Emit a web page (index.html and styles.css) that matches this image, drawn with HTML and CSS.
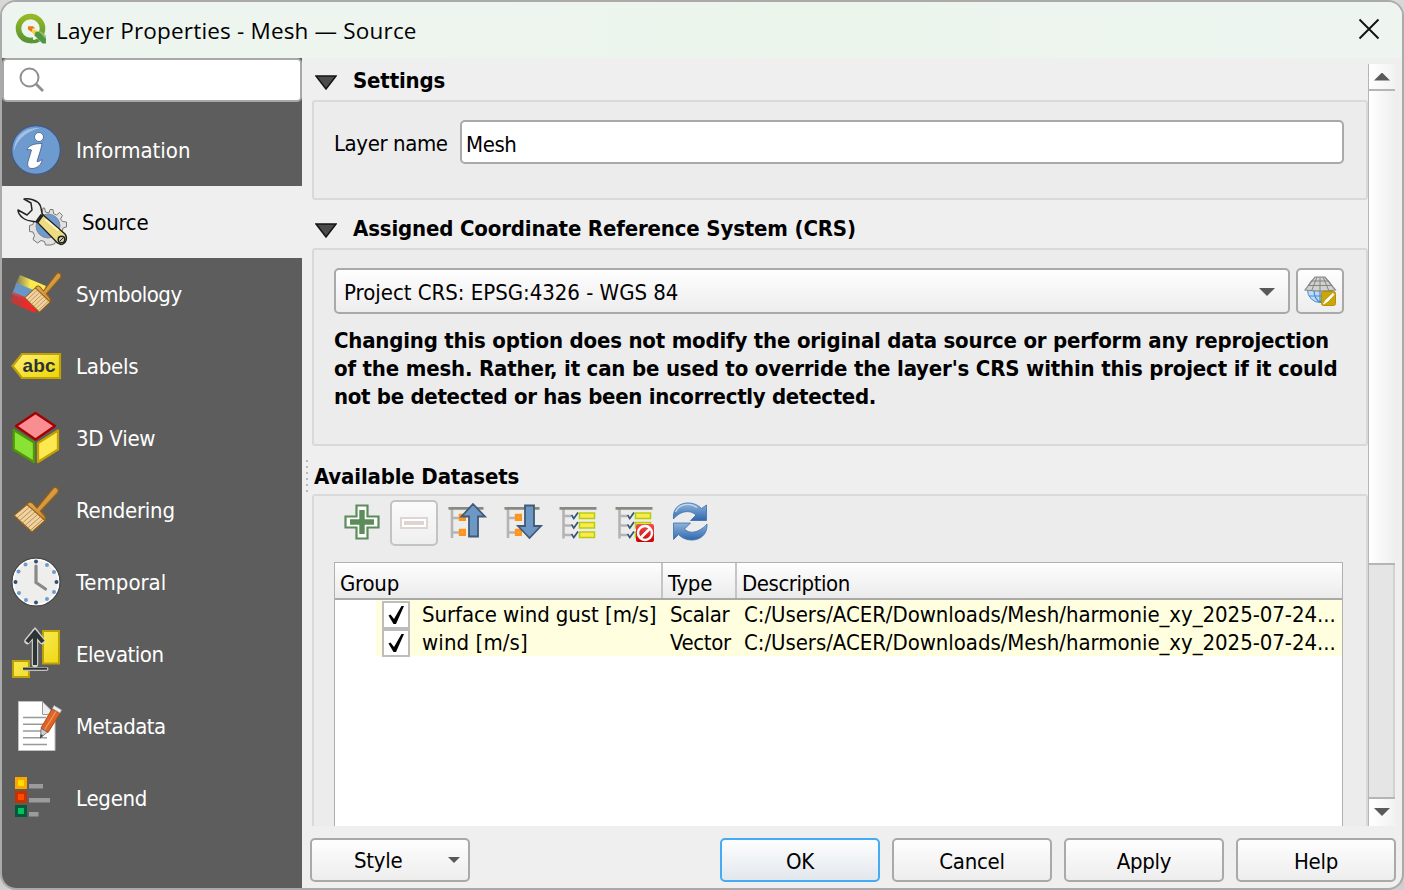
FILE: index.html
```html
<!DOCTYPE html>
<html lang="en">
<head>
<meta charset="utf-8">
<title>Layer Properties - Mesh — Source</title>
<link rel="stylesheet" href="styles.css">
</head>
<body>
<svg class="defs" width="0" height="0">
  <defs>
    <linearGradient id="yel" x1="0" y1="0" x2="1" y2="1"><stop offset="0" stop-color="#fff27a"/><stop offset="1" stop-color="#ecd400"/></linearGradient>
    <linearGradient id="wood" x1="0" y1="0" x2="1" y2="1"><stop offset="0" stop-color="#eebd69"/><stop offset="1" stop-color="#bd771c"/></linearGradient>
    <linearGradient id="logo" x1="0" y1="0" x2="0" y2="1"><stop offset="0" stop-color="#96b825"/><stop offset="1" stop-color="#589632"/></linearGradient>
    <linearGradient id="blue" x1="0" y1="0" x2="0" y2="1"><stop offset="0" stop-color="#8fb4dc"/><stop offset="1" stop-color="#2f68ad"/></linearGradient>
    <linearGradient id="red" x1="0" y1="0" x2="0" y2="1"><stop offset="0" stop-color="#ef5050"/><stop offset="1" stop-color="#cc0000"/></linearGradient>
    <linearGradient id="fadeY" x1="0" y1="0" x2="1" y2="0"><stop offset="0" stop-color="#fce94f" stop-opacity=".15"/><stop offset=".5" stop-color="#fce94f"/></linearGradient>
    <linearGradient id="fadeR" x1="0" y1="0" x2="1" y2="0"><stop offset="0" stop-color="#d93030" stop-opacity=".6"/><stop offset=".6" stop-color="#ef2929"/></linearGradient>
    <g id="brush">
      <path d="M53 488.500C55.500 485.800 60 489 57.500 493L40.500 511L44.500 515.500C46 518 45.500 520 44 521L27 505.500C27.500 502.500 30 501.500 32.500 503L37 508Z" fill="url(#wood)" stroke="#965f14" stroke-width="1.200"/>
      <path d="M27 504.500L45 520.500L32 532L14 515.500Z" fill="#f0d3a0" stroke="#965f14" stroke-width="1.200"/>
      <path d="M29.500 507L17 518M32.300 509.500L19.700 520.500M35 512L22.400 523M37.700 514.400L25.100 525.400M40.400 516.800L27.800 527.800M43 519.200L30.500 530.200" stroke="#b98d50" stroke-width="1" fill="none"/>
    </g>
    <g id="tree">
      <path d="M452 509V538M453 518H459M453 532.500H459" stroke="#b4b4b4" stroke-width="2.600" fill="none"/>
      <path d="M448.500 508.300H483.500" stroke="#888a80" stroke-width="2.800"/>
      <path d="M460.300 515.300H464.500V519.500H460.300ZM460.300 530.300H464.500V534.500H460.300Z" fill="#fcc94f" stroke="#ff9320" stroke-width="3"/>
    </g>
    <g id="checks">
      <path d="M563.500 509V538.500M564 516H571M564 525.500H571M564 535H571" stroke="#b4b4b4" stroke-width="2.600" fill="none"/>
      <path d="M559.500 508.300H596.500" stroke="#888a80" stroke-width="2.800"/>
      <path d="M579.500 513H594.500V518.500H579.500ZM579.500 522.500H594.500V528H579.500ZM579.500 532H594.500V537.500H579.500Z" fill="#fce94f" stroke="#b4cf0a" stroke-width="1.500"/>
      <path d="M571.500 515L573.800 518.500L578 512.500M571.500 524.500L573.800 528L578 522M571.500 534L573.800 537.500L578 531.500" stroke="#34536f" stroke-width="1.700" fill="none"/>
    </g>
  </defs>
</svg>

<div class="window">
  <header class="titlebar">
    <svg class="logo" viewBox="15 13 32 32">
      <circle cx="30.500" cy="28.500" r="12" fill="none" stroke="url(#logo)" stroke-width="5.600"/>
      <path d="M32 33.500L36.500 33.500L40 44H34Z" fill="#eef5f0"/>
      <path d="M30 40.200C34 40.600 35.500 39.500 37 38.500L40 41.500C37 43.300 34 43.500 30 43.200Z" fill="#589632"/>
      <path d="M34.500 31.500H38.500L46 38.500V43.500H42.500L34.500 35.500Z" fill="#519642"/>
      <path d="M38.500 31.500L46 38.500V36L41.500 31.500Z" fill="#8fbf6a"/>
      <path d="M28 26.300H33L35.300 28.500H32.500V32.500L28 29.500Z" fill="#ee7913"/>
      <path d="M32 30H36.500V31.500L34.500 33.500V35L31.500 32Z" fill="#f5d33b"/>
    </svg>
    <h1 class="title">Layer Properties - Mesh — Source</h1>
    <svg class="close" viewBox="0 0 22 22"><path d="M1.500 1.500L20.500 20.500M20.500 1.500L1.500 20.500" stroke="#111" stroke-width="1.900"/></svg>
  </header>

  <div class="body">
    <aside class="sidebar">
      <div class="search">
        <svg class="search-icon" viewBox="0 0 26 26"><circle cx="10.500" cy="10.500" r="9" fill="none" stroke="#8f8f8f" stroke-width="2"/><path d="M17 17L24 24" stroke="#8f8f8f" stroke-width="2.800"/></svg>
      </div>
      <nav class="nav">
        <div class="item">
          <svg class="icon" viewBox="8 114 60 72">
            <circle cx="36" cy="150" r="24.300" fill="#6d9bcf" stroke="#415a8c" stroke-width="1.200"/>
            <path d="M14 151C14 136 25 127 40 128C27 131 17 139 14 151Z" fill="#a4c1e2"/>
            <circle cx="39" cy="137" r="4.500" fill="#fff" stroke="#415a8c" stroke-width=".8"/>
            <path d="M27 150C28 145.500 34 143.500 42 143.500C41 150 38.500 156 37 161.500C38.500 161.800 40 161 42 159.500C42 164.500 37 168.500 32 168.500C28 168.500 27 165 28 161.500L31.500 150C30 149.300 28.500 149.500 27 150Z" fill="#fff" stroke="#415a8c" stroke-width=".8"/>
          </svg><span class="wide">Information</span>
        </div>
        <div class="item active">
          <svg class="icon" viewBox="8 186 66 72">
            <path d="M44.500 208L45.500 212L49 213L50 209.500H53L53.500 213.500L56.500 215L59.500 212.500L62.500 215.500L60.500 219L62.500 221.500L66.500 222V227L63 228L62 232L64.500 235L62 238.500L58.500 237L55.500 239.500L55 243.500L51 245H45.500L44.500 241.500L41 240.500L37.500 243L33 239.500L34.500 235.500L33 232L29.500 231.500V225.500L33 224.500L34 220L32 217L35.500 213.500L39 215L42 213L43 208Z" fill="#e2e2e2" stroke="#777975" stroke-width="1"/>
            <circle cx="48" cy="226" r="12" fill="#6d9bcf" stroke="#888a85"/>
            <path d="M24 199C29 198 37 200 40 205C42 209 41 213 43 215.500L37 222C34 221 28 222 23 218C19 215 18 213 18 210L27 215L32 210L31 203Z" fill="#eeeeec" stroke="#222" stroke-width="1.500" stroke-linejoin="round"/>
            <path d="M42.500 214.500L65 234C68 238 66 244 61 244.500L57.500 243L37 222Z" fill="#eedc82" stroke="#222" stroke-width="1.400"/>
            <path d="M42 215L37 222" stroke="#222" stroke-width="3.500"/><path d="M45.500 219.500L58.500 230.500" stroke="#fff6bc" stroke-width="2"/>
            <circle cx="61.500" cy="239.500" r="3.300" fill="#ccc9b0" stroke="#222" stroke-width="1.500"/><path d="M60 241L63 238" stroke="#222"/>
          </svg><span>Source</span>
        </div>
        <div class="item">
          <svg class="icon" viewBox="8 258 60 72">
            <path d="M20 275L46 286L41 296L15 285Z" fill="url(#fadeY)"/>
            <path d="M16.500 283L43 294L37 306L12 294Z" fill="#6797c9"/>
            <path d="M13 292L39 303L35 313L10 302Z" fill="url(#fadeR)"/>
            <use href="#brush" transform="translate(13.200,-156.500) scale(.82 .881)"/>
          </svg><span class="tight">Symbology</span>
        </div>
        <div class="item">
          <svg class="icon" viewBox="8 330 60 72">
            <path d="M12.500 366L22 354H60V378H22Z" fill="url(#yel)" stroke="#bfa008" stroke-width="2.200"/>
            <text x="22.500" y="371.500" class="abc" textLength="33">abc</text>
          </svg><span>Labels</span>
        </div>
        <div class="item">
          <svg class="icon" viewBox="8 402 60 72">
            <path d="M35.500 413L55 426L35.500 439.500L16 426Z" fill="#f98e92" stroke="#a40000" stroke-width="2.300" stroke-linejoin="round"/>
            <path d="M13.700 430L34 442.500V462L13.700 449.500Z" fill="#8ae234" stroke="#4e9a06" stroke-width="2.300" stroke-linejoin="round"/>
            <path d="M58 430.500L38 443V462L58 449.500Z" fill="#fce94f" stroke="#c4a000" stroke-width="2.300" stroke-linejoin="round"/>
          </svg><span>3D View</span>
        </div>
        <div class="item"><svg class="icon" viewBox="8 474 60 72"><use href="#brush"/></svg><span>Rendering</span></div>
        <div class="item">
          <svg class="icon" viewBox="8 546 60 72">
            <circle cx="36" cy="582" r="24" fill="#eeeeec" stroke="#4b4b4b" stroke-width="1.600"/><circle cx="36" cy="582" r="22.600" fill="none" stroke="#fff" stroke-width="1.500"/>
            <g fill="#34506f"><circle cx="36" cy="561.500" r="2"/><circle cx="36" cy="602.500" r="2"/><circle cx="15.500" cy="582" r="2"/><circle cx="56.500" cy="582" r="2"/></g>
            <g fill="#6d9bcf"><circle cx="47" cy="565" r="2"/><circle cx="54" cy="572" r="2"/><circle cx="54" cy="592" r="2"/><circle cx="47" cy="599" r="2"/><circle cx="26" cy="600" r="2"/><circle cx="19" cy="593" r="2"/><circle cx="18.500" cy="571.500" r="2"/><circle cx="25.500" cy="564.500" r="2"/></g>
            <path d="M36 566V582.500L45.500 589" fill="none" stroke="#888a85" stroke-width="3.200" stroke-linecap="round"/>
          </svg><span class="wide">Temporal</span>
        </div>
        <div class="item">
          <svg class="icon" viewBox="8 618 60 72">
            <path d="M13 661H29V677H13ZM43 631H59V663.500H43Z" fill="url(#yel)" stroke="#bfa008" stroke-width="2"/>
            <path d="M25 669H46.500" stroke="#bfbfbf" stroke-width="4" stroke-linecap="round"/>
            <path d="M35 664V632M27.500 641L35 632L42 641" fill="none" stroke="#d3d7cf" stroke-width="6.400" stroke-linecap="round"/>
            <path d="M35 665V632M27 642L35 632.500L43 642" fill="none" stroke="#2e3436" stroke-width="4.200"/><path d="M23 668.700H47" stroke="#2e3436" stroke-width="2"/>
          </svg><span class="tight">Elevation</span>
        </div>
        <div class="item">
          <svg class="icon" viewBox="8 690 60 72">
            <path d="M18.500 701.500H42L55 714V750.500H18.500Z" fill="#fff" stroke="#c0c0c0"/>
            <path d="M42.500 701.500V714.500H55Z" fill="#eee" stroke="#999"/>
            <path d="M23 717.500H46M23 724.300H43M23 731H42M23 737.700H47M23 744.500H47" stroke="#999" stroke-width="1.600"/>
            <path d="M52 709L60 713.500L48 732.500L41 728Z" fill="#dc6428" stroke="#b24c18"/><path d="M56 711.500L44.500 730" stroke="#f59a50" stroke-width="1.300"/>
            <path d="M54 705.500L61.500 710L60 713L52.500 708.500Z" fill="#eeeeec" stroke="#aaa" stroke-width=".6"/>
            <path d="M41 728.500L47.500 732L40.500 738Z" fill="#ccc" stroke="#555" stroke-width=".7"/><path d="M40.700 734L43 735.500L40 738.500Z" fill="#444"/>
          </svg><span class="tight">Metadata</span>
        </div>
        <div class="item">
          <svg class="icon" viewBox="8 762 60 72">
            <path d="M16.500 778.500H25.500V787.500H16.500Z" fill="#ffde00" stroke="#ffa500" stroke-width="3"/>
            <path d="M16.500 792.500H25.500V801.500H16.500Z" fill="#ff4b00" stroke="#c43200" stroke-width="3"/>
            <path d="M16.500 806.500H25.500V815.500H16.500Z" fill="#00c15c" stroke="#00593a" stroke-width="3"/>
            <path d="M29 786.300H43M29 800.300H50M29 814.300H38.500" stroke="#9b9b9b" stroke-width="4.600"/>
          </svg><span>Legend</span>
        </div>
      </nav>
    </aside>

    <main class="main">
      <div class="viewport">
        <div class="content">
          <h2 class="section"><svg class="fold" viewBox="0 0 22 16"><path d="M1 1H21L11 14Z" fill="#4b4b4b" stroke="#151515" stroke-width="1.500"/></svg><span>Settings</span></h2>
          <section class="group settings">
            <label class="field-label">Layer name</label><div class="field">Mesh</div>
          </section>
          <h2 class="section second"><svg class="fold" viewBox="0 0 22 16"><path d="M1 1H21L11 14Z" fill="#4b4b4b" stroke="#151515" stroke-width="1.500"/></svg><span>Assigned Coordinate Reference System (CRS)</span></h2>
          <section class="group crs">
            <div class="crs-row">
              <div class="combo"><span>Project CRS: EPSG:4326 - WGS 84</span><i class="arrow"></i></div>
              <div class="pick">
                <svg viewBox="1298 270 44 42">
                  <circle cx="1320" cy="290" r="12.500" fill="#b9dcff" stroke="#4d89c8"/>
                  <path d="M1320 290V303M1309 296H1331M1314 290Q1314 299 1320 302M1326 290Q1326 299 1320 302" fill="none" stroke="#4d89c8" stroke-width="1.200"/>
                  <path d="M1315 277H1325L1335.500 290C1325 291.500 1315 291.500 1305 290Z" fill="#d0d2ce" stroke="#858585" stroke-width="1.200"/>
                  <path d="M1311.500 281H1329M1308.500 285.500H1332M1320 277V291M1317 277L1311.500 291M1323 277L1329 291" stroke="#858585" fill="none"/>
                  <rect x="1321.500" y="291.500" width="14" height="14" rx="2" fill="#c9a60c" stroke="#b89100"/><path d="M1333 293.500L1326 300L1323.500 304L1327.500 301.500L1334 294.500Z" fill="#fff" stroke="#fff"/>
                </svg>
              </div>
            </div>
            <p class="note"><span>Changing this option does not modify the original data source or perform any reprojection</span><span class="n2">of the mesh. Rather, it can be used to override the layer's CRS within this project if it could</span><span class="n3">not be detected or has been incorrectly detected.</span></p>
          </section>
          <h2 class="section datasets-title"><i class="grip"></i><span>Available Datasets</span></h2>
          <section class="group datasets">
            <div class="toolbar">
              <svg class="tool t-add" viewBox="338 500 52 46"><path d="M356.500 505.500H367.500V516.500H378.500V527.500H367.500V538.500H356.500V527.500H345.500V516.500H356.500Z" fill="#fff" stroke="#5b8c5a" stroke-width="2.200"/><path d="M362 510V534M350 522H374" stroke="#5b8c5a" stroke-width="5.400"/></svg>
              <div class="tool-off"><svg viewBox="0 0 28 12"><path d="M1 1H27V11H1Z" fill="#fff" stroke="#ded5d3" stroke-width="2"/><path d="M4 6H24" stroke="#ded5d3" stroke-width="4"/></svg></div>
              <svg class="tool t-up" viewBox="438 500 60 46"><use href="#tree"/><path d="M473 504L485 516.500H478V536.500H469V516.500H461.500Z" fill="#6d97c4" stroke="#415a75" stroke-width="1.800"/></svg>
              <svg class="tool" viewBox="498 500 56 46"><use href="#tree" x="56"/><path d="M525 505.500H534V526H541L529.500 538L518 526H525Z" fill="#6d97c4" stroke="#415a75" stroke-width="1.800"/></svg>
              <svg class="tool" viewBox="554 500 56 46"><use href="#checks"/></svg>
              <svg class="tool" viewBox="610 500 56 46"><use href="#checks" x="56"/><rect x="636" y="524" width="18" height="18" rx="2" fill="url(#red)"/><circle cx="645" cy="533" r="7" fill="none" stroke="#fff" stroke-width="2.400"/><path d="M640.500 538L650 528.500" stroke="#fff" stroke-width="2.600"/></svg>
              <svg class="tool" viewBox="666 500 56 46">
                <path d="M673.500 519C671.500 502 692 498.500 701.500 508.500L706.500 505V520.500H690.500L696 515C689 508.500 679 512 673.500 519Z" fill="url(#blue)" stroke="#3a6daa" stroke-width=".8"/>
                <path d="M707 524C708 541 688 544.500 678.500 534.500L673.500 539.500V523H690.500L684.500 529C691 535.500 701 531 707 524Z" fill="url(#blue)" stroke="#3a6daa" stroke-width=".8"/>
                <path d="M675.500 512C679 504 690 502 697 507.500" fill="none" stroke="#c4daf0" stroke-width="1.300"/>
              </svg>
            </div>
            <div class="table">
              <div class="thead"><div class="th">Group</div><div class="th">Type</div><div class="th">Description</div></div>
              <div class="tr"><div class="check"><svg viewBox="0 0 18 20"><path d="M1.500 10.500L3.500 9.500L7 14L14.500 1H17L9 19H6.500Z" fill="#000"/></svg></div><span class="name">Surface wind gust [m/s]</span><span class="type">Scalar</span><span class="desc">C:/Users/ACER/Downloads/Mesh/harmonie_xy_2025-07-24...</span></div>
              <div class="tr"><div class="check"><svg viewBox="0 0 18 20"><path d="M1.500 10.500L3.500 9.500L7 14L14.500 1H17L9 19H6.500Z" fill="#000"/></svg></div><span class="name wind">wind [m/s]</span><span class="type">Vector</span><span class="desc">C:/Users/ACER/Downloads/Mesh/harmonie_xy_2025-07-24...</span></div>
            </div>
          </section>
        </div>
        <div class="scrollbar"><div class="sb-btn"><i class="arrow up"></i></div><div class="thumb"></div><div class="track"></div><div class="sb-btn last"><i class="arrow"></i></div></div>
      </div>
      <footer class="footer">
        <div class="btn style-btn"><span>Style</span><i class="arrow small"></i></div>
        <div class="btn ok">OK</div><div class="btn">Cancel</div><div class="btn">Apply</div><div class="btn">Help</div>
      </footer>
    </main>
  </div>
</div>
</body>
</html>
```
FILE: styles.css
```css
* { box-sizing: border-box; }
body {
  margin: 0; width: 1404px; height: 890px; padding: 2px; overflow: hidden;
  background: linear-gradient(#d8d8d8, #b0b0b0 20%, #b0b0b0 90%, #d0d0d0);
  font: 22px/28px "DejaVu Sans Condensed", "DejaVu Sans", sans-serif;
  font-stretch: condensed; letter-spacing: -0.25px; color: #000;
}
svg { display: block; flex: none; }
.defs { position: absolute; }
h1, h2, p { margin: 0; }
span, .th, .btn { white-space: nowrap; }
.window { width: 1400px; height: 886px; border-radius: 14px; overflow: hidden; background: #efefef; box-shadow: 0 0 0 2px #aaa; }
.titlebar { height: 56px; display: flex; align-items: center; padding: 0 22px 2px 13px; background: linear-gradient(90deg, #eef5f0, #ecf5ec 60%, #eef5f1); }
.logo { width: 32px; height: 32px; }
.title { flex: 1; margin-left: 9px; font: 400 22.500px/30px "Open Sans", "Noto Sans", sans-serif; letter-spacing: 0.18px; padding-top: 3px; }
.close { width: 22px; height: 22px; }
.body { display: flex; height: 830px; }
.sidebar { width: 300px; background: #5d5d5d; }
.search { height: 44px; border: 2px solid #a8a8a8; border-radius: 5px; background: #fff; padding: 7px 0 0 15px; }
.search-icon { width: 26px; height: 26px; }
.nav { padding-top: 12px; }
.item { height: 72px; display: flex; align-items: center; gap: 8px; padding-left: 6px; color: #fff; }
.item span { padding-top: 2px; }
.item .wide { letter-spacing: 0; }
.item .tight { letter-spacing: -0.5px; }
.icon { width: 60px; height: 72px; }
.item.active { background: #efefef; color: #000; }
.item.active .icon { width: 66px; }
.abc { font: bold 19px "Liberation Sans", Arial, sans-serif; fill: #2e3436; letter-spacing: 0; }
.main { flex: 1; display: flex; flex-direction: column; }
.viewport { height: 768px; display: flex; overflow: hidden; }
.content { width: 1066px; }
.section { display: flex; align-items: center; height: 42px; padding: 3px 0 0 13px; font-size: 22px; font-weight: bold; line-height: 28px; letter-spacing: -0.16px; }
.section span { padding-top: 1px; }
.fold { width: 22px; height: 16px; margin: 4px 16px 0 0; }
.section.second { height: 48px; padding: 9px 0 0 13px; }
.group { margin-left: 10px; width: 1056px; border: 2px solid #d9d9d9; border-radius: 3px; background: #ececec; }
.settings { height: 100px; padding: 18px 22px 0 20px; display: flex; align-items: flex-start; }
.field-label { width: 126px; line-height: 44px; padding-top: 2px; letter-spacing: -0.4px; }
.field { flex: 1; height: 44px; border: 2px solid #a9a9a9; border-radius: 5px; background: #fff; line-height: 46px; padding-left: 4px; letter-spacing: -0.4px; }
.crs { height: 198px; padding: 18px 22px 0 20px; }
.crs-row { display: flex; gap: 6px; }
.combo { flex: 1; height: 46px; border: 2px solid #a9a9a9; border-radius: 5px; background: linear-gradient(#fefefe, #ededed); display: flex; align-items: center; justify-content: space-between; padding: 2px 13px 0 8px; letter-spacing: -0.02px; }
.combo span { padding-top: 1px; }
.arrow { width: 16px; height: 8px; background: #595959; clip-path: polygon(0 0, 100% 0, 50% 100%); }
.arrow.up { clip-path: polygon(50% 0, 100% 100%, 0 100%); }
.arrow.small { width: 12px; height: 6px; }
.pick { width: 48px; height: 46px; border: 2px solid #a9a9a9; border-radius: 5px; background: linear-gradient(#fefefe, #ededed); }
.pick svg { width: 44px; height: 42px; }
.note { margin-top: 13px; font-weight: bold; letter-spacing: -0.2px; }
.note span { display: block; }
.note .n2 { letter-spacing: -0.18px; }
.note .n3 { letter-spacing: -0.3px; }
.datasets-title { height: 48px; padding: 12px 0 0 4px; }
.grip { width: 2px; height: 32px; margin-right: 6px; background: repeating-linear-gradient(#bbb 0 2px, transparent 2px 6px); }
.datasets { height: 400px; padding: 4px 23px 0 20px; }
.toolbar { display: flex; height: 62px; padding-left: 4px; }
.tool { width: 56px; height: 46px; }
.t-add { width: 52px; }
.t-up { width: 60px; }
.tool-off { width: 48px; height: 46px; border: 2px solid #c3c3c3; border-radius: 5px; background: linear-gradient(#fafafa, #efefef); display: flex; align-items: center; justify-content: center; }
.tool-off svg { width: 28px; height: 12px; }
.table { height: 330px; border: 1px solid #b0b0b0; background: #fff; }
.thead { height: 37px; display: grid; grid-template: 35px / 328px 74px 1fr; background: linear-gradient(#fefefe, #ebebeb); border-bottom: 2px solid #a9a9a9; }
.th { line-height: 41px; padding-left: 5px; height: 35px; border-right: 2px solid #c5c5c5; }
.th:last-child { border-right: 0; letter-spacing: -0.45px; }
.tr { height: 28px; margin-left: 41px; background: #ffffdf; display: grid; grid-template-columns: 46px 248px 74px 1fr; align-items: center; padding-left: 6px; }
.tr span { padding-top: 1px; margin-left: -6px; }
.check { width: 28px; height: 28px; border: 2px solid #bdbdbd; background: #fff; display: flex; align-items: center; justify-content: center; }
.check svg { width: 18px; height: 20px; }
.name { letter-spacing: -0.07px; }
.name.wind { letter-spacing: 0.1px; }
.type { letter-spacing: -0.35px; }
.desc { letter-spacing: -0.05px; }
.scrollbar { width: 27px; margin-top: 6px; display: flex; flex-direction: column; border-left: 1px solid #b5b5b5; }
.sb-btn { height: 27px; display: flex; align-items: center; justify-content: center; background: linear-gradient(90deg, #fff, #f2f2f2); border-bottom: 2px solid #b5b5b5; }
.thumb { height: 474px; background: linear-gradient(90deg, #fff, #efefef); border-bottom: 2px solid #b5b5b5; }
.track { flex: 1; background: #e5e5e5; border-right: 2px solid #d2d2d2; }
.sb-btn.last { height: 29px; border-bottom: 0; border-top: 2px solid #b5b5b5; padding-bottom: 1px; }
.footer { flex: 1; display: flex; gap: 12px; padding: 12px 0 0 8px; }
.btn { width: 160px; height: 44px; border: 2px solid #a9a9a9; border-radius: 5px; background: linear-gradient(#fefefe, #ededed); line-height: 43px; text-align: center; }
.style-btn { display: flex; align-items: center; justify-content: space-between; padding: 0 8px 0 42px; margin-right: 238px; }
.style-btn span { padding-top: 1px; }
.btn.ok { border-color: #45abf7; background: linear-gradient(#fdfeff, #e2e7ec); }
```
